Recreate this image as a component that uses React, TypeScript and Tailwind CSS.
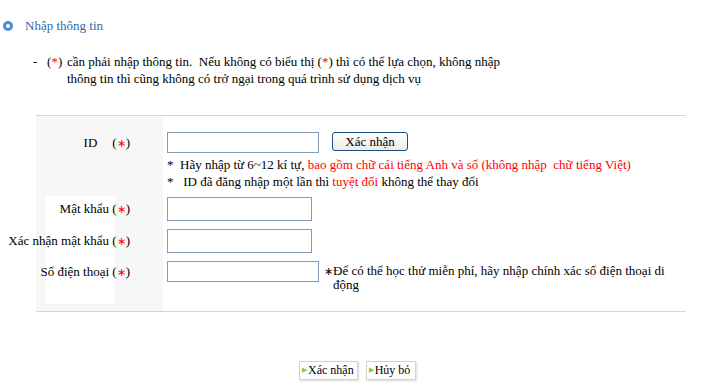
import React from 'react';

const Req: React.FC = () => (
  <span>
    (<span className="text-[#ff0000] text-[11px]">∗</span>)
  </span>
);

const Field: React.FC<{ w: string; h: string }> = ({ w, h }) => (
  <div className={`${w} ${h} border border-[#7f9db9] bg-white`}></div>
);

export default function App() {
  return (
    <div className="w-[717px] h-[392px] bg-white text-black text-[13px] font-['Liberation_Serif','Times_New_Roman',serif] overflow-hidden">
      {/* Title */}
      <div className="pt-[18px] pl-[3px] h-[34px] flex items-center gap-[12px]">
        <div className="w-[10px] h-[10px] rounded-full border-[3px] border-[#4a8ad8] bg-white"></div>
        <span className="text-[#2f6bb0] leading-[16px]">Nhập thông tin</span>
      </div>

      {/* Note */}
      <div className="mt-[19px] pl-[33px] flex leading-[17px]">
        <div className="w-[34px] shrink-0 whitespace-nowrap">
          -&nbsp;&nbsp;&nbsp;(<span className="text-[#ff0000]">*</span>)
        </div>
        <div className="whitespace-nowrap">
          cần phải nhập thông tin.&nbsp; Nếu không có biểu thị (<span className="text-[#ff0000]">*</span>) thì có thể lựa chọn, không nhập
          <br />
          thông tin thì cũng không có trở ngại trong quá trình sử dụng dịch vụ
        </div>
      </div>

      {/* Form table */}
      <div className="mt-[28px] ml-[36px] w-[650px] border-t border-b border-[#d6d6d6]">
        {/* ID row */}
        <div className="flex">
          <div className="w-[127px] shrink-0 bg-[#f7f7f7] pt-[16px] pr-[33px] flex justify-end">
            <div className="h-[21px] flex items-center whitespace-nowrap">
              <span className="mr-[15px]">ID</span>
              <Req />
            </div>
          </div>
          <div className="flex-1 pt-[16px] pl-[4px] flex items-start gap-[13px]">
            <Field w="w-[152px]" h="h-[21px]" />
            <button className="w-[76px] h-[19px] rounded-[3px] border border-[#1c4f85] bg-[linear-gradient(#ffffff,#ecebe6)] text-[13px] leading-[17px] text-black">
              Xác nhận
            </button>
          </div>
        </div>

        {/* Hints row */}
        <div className="flex">
          <div className="w-[127px] shrink-0 bg-[#f7f7f7]"></div>
          <div className="flex-1 pl-[4px] pt-[3px] pb-[6px] leading-[17px] whitespace-nowrap">
            <div>
              *&nbsp; Hãy nhập từ 6~12 kí tự, <span className="text-[#ff0000]">bao gồm chữ cái tiếng Anh và số (không nhập&nbsp; chữ tiếng Việt)</span>
            </div>
            <div>
              *&nbsp;&nbsp; ID đã đăng nhập một lần thì <span className="text-[#ff0000]">tuyệt đối</span> không thể thay đổi
            </div>
          </div>
        </div>

        {/* Password / confirm / phone */}
        <div className="flex">
          <div className="w-[127px] shrink-0 bg-[#f7f7f7] pl-[10px] pb-[7px]">
            <div className="w-[69px] bg-white">
              <div className="w-[84px] h-[32px] pt-[1px]">
                <div className="h-[24px] flex items-center justify-end whitespace-nowrap">
                  Mật khẩu&nbsp;<Req />
                </div>
              </div>
              <div className="w-[84px] h-[32px] pt-[1px]">
                <div className="h-[24px] flex items-center justify-end whitespace-nowrap">
                  Xác nhận mật khẩu&nbsp;<Req />
                </div>
              </div>
              <div className="w-[84px] h-[44px] pt-[1px]">
                <div className="h-[21px] flex items-center justify-end whitespace-nowrap">
                  Số điện thoại&nbsp;<Req />
                </div>
              </div>
            </div>
          </div>
          <div className="flex-1 pl-[4px] pb-[7px]">
            <div className="h-[32px] pt-[1px]">
              <Field w="w-[145px]" h="h-[24px]" />
            </div>
            <div className="h-[32px] pt-[1px]">
              <Field w="w-[145px]" h="h-[24px]" />
            </div>
            <div className="h-[44px] pt-[1px] flex items-start gap-[5px]">
              <Field w="w-[152px]" h="h-[21px]" />
              <div className="mt-[3px] leading-[14px] whitespace-nowrap pl-[9px] -indent-[9px]">
                <span className="text-[11px]">∗</span>Để có thể học thử miễn phí, hãy nhập chính xác số điện thoại di
                <br />
                động
              </div>
            </div>
          </div>
        </div>
      </div>

      {/* Bottom buttons */}
      <div className="mt-[49px] pl-[299px] flex gap-[8px]">
        <button className="h-[19px] pl-[2px] pr-[3px] flex items-center gap-[1px] border border-[#d2d2d2] bg-white shadow-[1px_1px_2px_rgba(0,0,0,0.15)] text-[12px] leading-[17px]">
          <span className="text-[#8dc63f] text-[7px]">▶</span>Xác nhận
        </button>
        <button className="h-[19px] pl-[2px] pr-[5px] flex items-center gap-[1px] border border-[#d2d2d2] bg-white shadow-[1px_1px_2px_rgba(0,0,0,0.15)] text-[12px] leading-[17px]">
          <span className="text-[#8dc63f] text-[7px]">▶</span>Hủy bỏ
        </button>
      </div>
    </div>
  );
}
